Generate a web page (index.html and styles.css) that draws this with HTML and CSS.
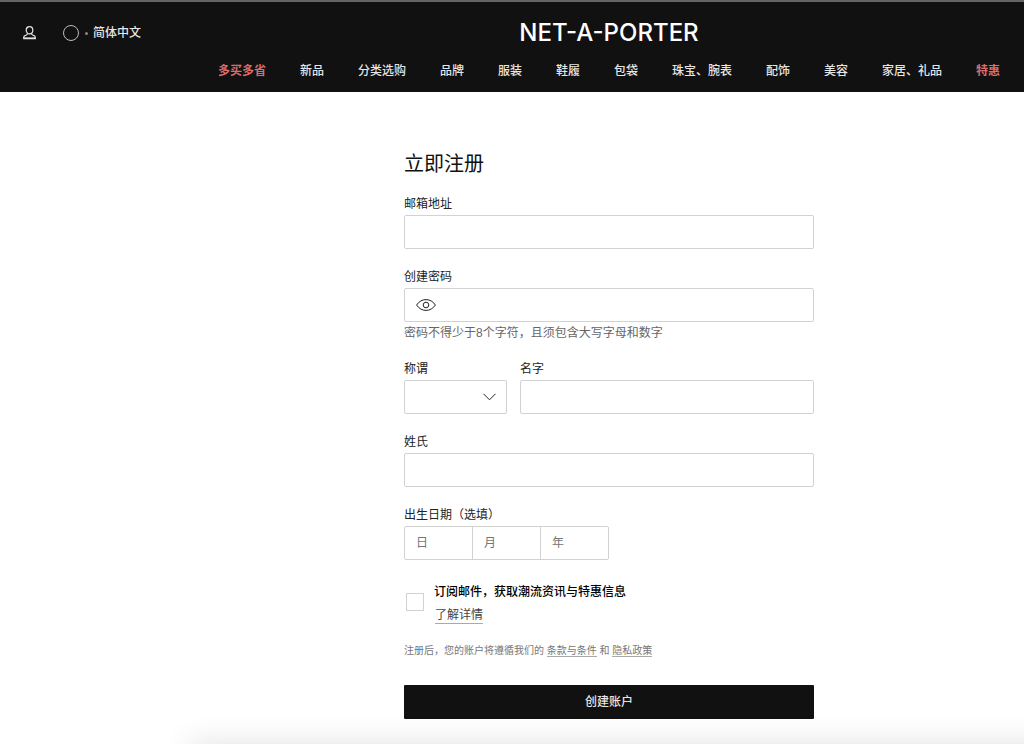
FILE: index.html
```html
<!DOCTYPE html>
<html lang="zh-CN">
<head>
<meta charset="utf-8">
<meta name="viewport" content="width=device-width, initial-scale=1">
<title>立即注册 | NET-A-PORTER</title>
<link rel="stylesheet" href="styles.css">
</head>
<body>
<header class="site-header">
  <div class="top-row">
    <div class="utilities">
      <a class="account" href="#" aria-label="账户">
        <svg width="13" height="14" viewBox="0 0 13 14" fill="none" stroke="currentColor" stroke-width="1.2" stroke-linejoin="round">
          <ellipse cx="6.500" cy="4.300" rx="3.300" ry="3.600"/>
          <path d="M4.600 7.300C4.600 8.600 3.800 9 2.600 9.400C1.300 9.800.7 10.400.7 11.500V12.700H12.300V11.500C12.300 10.400 11.700 9.800 10.400 9.400C9.200 9 8.400 8.600 8.400 7.300"/>
          <path d="M.8 12.200H12.200" stroke-width="1.600"/>
        </svg>
      </a>
      <button class="language" type="button"><span class="flag"></span><span class="dot"></span>简体中文</button>
    </div>
    <a class="logo" href="#">NET-A-PORTER</a>
  </div>
  <nav class="main-nav">
    <a class="promo" href="#">多买多省</a>
    <a href="#">新品</a>
    <a href="#">分类选购</a>
    <a href="#">品牌</a>
    <a href="#">服装</a>
    <a href="#">鞋履</a>
    <a href="#">包袋</a>
    <a href="#">珠宝、腕表</a>
    <a href="#">配饰</a>
    <a href="#">美容</a>
    <a href="#">家居、礼品</a>
    <a class="promo" href="#">特惠</a>
  </nav>
</header>
<main class="content">
  <form class="register">
    <h1 class="title">立即注册</h1>
    <div class="field">
      <label class="label" for="email">邮箱地址</label>
      <input class="control" id="email" type="email">
    </div>
    <div class="field field-hinted">
      <label class="label" for="password">创建密码</label>
      <div class="control password">
        <button class="reveal" type="button" aria-label="显示密码">
          <svg width="20" height="12" viewBox="0 0 20 12" fill="none" stroke="currentColor">
            <path d="M.6 6C3 2.400 6.300.6 10 .6S17 2.400 19.400 6C17 9.600 13.700 11.400 10 11.400S3 9.600.6 6Z"/>
            <circle cx="10" cy="6" r="2.800"/>
          </svg>
        </button>
        <input class="password-input" id="password" type="password">
      </div>
      <p class="hint">密码不得少于8个字符，且须包含大写字母和数字</p>
    </div>
    <div class="name-row">
      <div class="field">
        <label class="label" for="salutation">称谓</label>
        <div class="select-wrap">
          <select class="control select" id="salutation"><option value=""></option></select>
          <svg class="chevron" width="13" height="8" viewBox="0 0 13 8" fill="none" stroke="currentColor"><path d="M.5.8L6.500 6.800L12.500.8"/></svg>
        </div>
      </div>
      <div class="field">
        <label class="label" for="first-name">名字</label>
        <input class="control" id="first-name" type="text">
      </div>
    </div>
    <div class="field">
      <label class="label" for="last-name">姓氏</label>
      <input class="control" id="last-name" type="text">
    </div>
    <div class="field">
      <label class="label" for="day">出生日期（选填）</label>
      <div class="control birthday">
        <input class="date-part" id="day" type="text" placeholder="日" aria-label="日">
        <input class="date-part" type="text" placeholder="月" aria-label="月">
        <input class="date-part" type="text" placeholder="年" aria-label="年">
      </div>
    </div>
    <div class="subscribe">
      <input class="checkbox" id="subscribe" type="checkbox">
      <div class="subscribe-text">
        <label class="subscribe-label" for="subscribe">订阅邮件，获取潮流资讯与特惠信息</label>
        <a class="more" href="#">了解详情</a>
      </div>
    </div>
    <p class="terms">注册后，您的账户将遵循我们的 <a href="#">条款与条件</a> 和 <a href="#">隐私政策</a></p>
    <button class="submit" type="submit">创建账户</button>
  </form>
</main>
</body>
</html>
```
FILE: styles.css
```css
* {
  box-sizing: border-box;
}

:root {
  --side: 194px;
  --line: #d2d2d2;
  --ink: #111;
}

body {
  margin: 0;
  background: #fff;
  color: #222;
  font: 12px/24px "Liberation Sans", "Noto Sans CJK SC", sans-serif;
}

input,
select,
button {
  margin: 0;
  padding: 0;
  border: 0;
  background: none;
  color: inherit;
  font: inherit;
}

/* Header */
.site-header {
  padding-bottom: 9px;
  border-top: 2px solid #626465;
  background: var(--ink);
  color: #e6e6e6;
  font-weight: 500;
}

.site-header a {
  color: inherit;
  text-decoration: none;
}

.top-row {
  display: grid;
  grid-template-columns: var(--side) 1fr;
  align-items: center;
  height: 57px;
  padding-top: 5px;
}

.utilities {
  display: flex;
  align-items: center;
  gap: 27px;
  padding-left: 23px;
}

.account,
.language {
  display: flex;
  align-items: center;
}

.flag {
  width: 16px;
  height: 16px;
  margin-right: 6px;
  border: 1px solid #bbb;
  border-radius: 50%;
}

.dot {
  width: 3px;
  height: 3px;
  margin-right: 5px;
  border-radius: 50%;
  background: #888;
}

.logo {
  justify-self: center;
  font: 500 24px/32px Inter, sans-serif;
}

.site-header .logo {
  color: #fff;
}

.main-nav {
  display: flex;
  justify-content: center;
  gap: 34px;
  padding-left: var(--side);
  white-space: nowrap;
}

.main-nav .promo {
  color: #dc6c6a;
  font-weight: 700;
}

/* Registration form */
.content {
  display: flex;
  justify-content: center;
  padding: 56px 0 24px var(--side);
}

.register {
  width: 100%;
  max-width: 410px;
}

.title {
  margin: 0 0 13px;
  color: var(--ink);
  font-size: 20px;
  font-weight: 400;
  line-height: 32px;
}

.field {
  margin-bottom: 17px;
}

.field-hinted {
  margin-bottom: 14px;
}

.label {
  display: block;
  line-height: 22px;
}

.control {
  display: block;
  width: 100%;
  height: 34px;
  border: 1px solid var(--line);
  border-radius: 2px;
}

.password {
  display: flex;
}

.reveal {
  display: flex;
  align-items: center;
  padding: 0 11px;
}

.password-input {
  flex: 1;
  min-width: 0;
}

.hint {
  margin: 0;
  color: #666;
  line-height: 22px;
}

.name-row {
  display: grid;
  grid-template-columns: 1fr 294px;
  gap: 13px;
}

.select-wrap {
  position: relative;
}

.select {
  appearance: none;
}

.chevron {
  position: absolute;
  top: 13px;
  right: 11px;
  pointer-events: none;
}

.birthday {
  display: flex;
  width: 50%;
}

.date-part {
  flex: 1;
  min-width: 0;
  padding-left: 11px;
}

.date-part + .date-part {
  border-left: 1px solid var(--line);
}

.date-part::placeholder {
  color: #757575;
}

.subscribe {
  display: flex;
  align-items: center;
  gap: 10px;
  margin: 20px 0 17px;
  padding-left: 2px;
}

.checkbox {
  width: 18px;
  height: 18px;
  border: 1px solid var(--line);
  appearance: none;
}

.checkbox:checked {
  background: var(--ink);
}

.subscribe-text {
  display: flex;
  flex-direction: column;
  align-items: flex-start;
}

.subscribe-label {
  color: #000;
  font-weight: 500;
}

.more {
  margin: 3px 0 0 1px;
  border-bottom: 1px solid #aaa;
  color: #444;
  line-height: 16px;
  text-decoration: none;
}

.terms {
  margin: 0 0 24px;
  color: #777;
  font-size: 10px;
  line-height: 20px;
}

.terms a {
  border-bottom: 1px solid #aaa;
  color: inherit;
  text-decoration: none;
}

.submit {
  display: block;
  width: 100%;
  height: 34px;
  border-radius: 1px;
  background: var(--ink);
  color: #e6e6e6;
  font-weight: 500;
}

/* Soft shade along the lower edge of the window */
body::after {
  position: fixed;
  top: 100%;
  right: -40px;
  left: 190px;
  height: 40px;
  box-shadow: 0 0 32px rgba(0, 0, 0, 0.12);
  content: "";
  pointer-events: none;
}
```
